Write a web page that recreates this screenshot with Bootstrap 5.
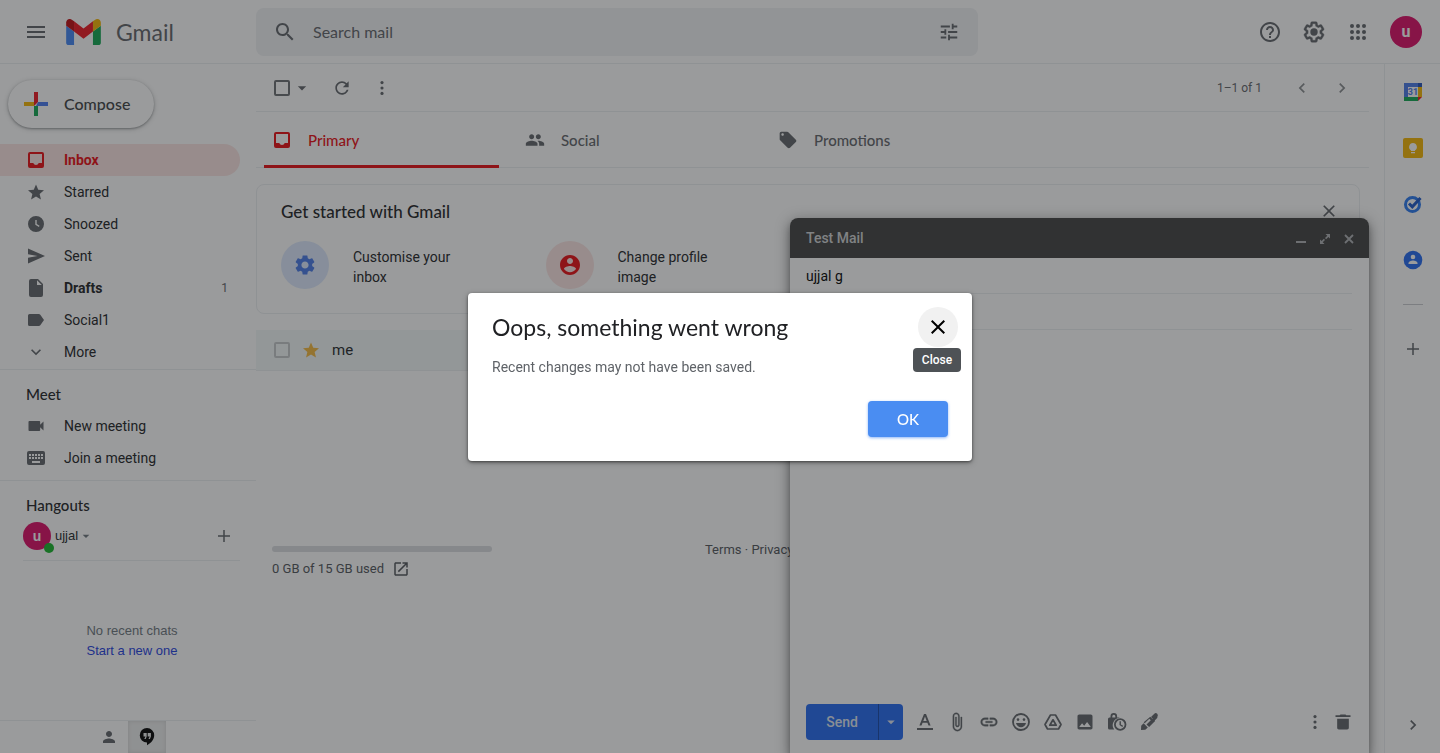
<!DOCTYPE html>
<html lang="en">
<head>
<meta charset="utf-8">
<meta name="viewport" content="width=device-width, initial-scale=1">
<title>Inbox - Gmail</title>
<link rel="stylesheet" href="https://cdn.jsdelivr.net/npm/bootstrap@5.3.0/dist/css/bootstrap.min.css">
<style>
  :root { --line: #eceef1; --ink: #202124; --muted: #5f6368; --accent: #ea0a10; --blue: #2268f0; }
  body { font-family: Roboto, "Liberation Sans", sans-serif; font-size: 14px; line-height: 20px; color: var(--ink); background: #fff; }
  .head-font { font-family: Lato, "Open Sans", sans-serif; }
  .rule-top { border-top: 1px solid var(--line); }
  .rule-bottom { border-bottom: 1px solid var(--line); }
  svg { display: block; fill: currentColor; flex: none; }
  .i16 { width: 16px; height: 16px; }
  .i18 { width: 18px; height: 18px; }
  .i20 { width: 20px; height: 20px; }
  .i22 { width: 22px; height: 22px; }
  .i24 { width: 24px; height: 24px; }
  .bare { background: none; border: 0; padding: 0; color: var(--muted); display: inline-flex; align-items: center; justify-content: center; }
  .hit44 { width: 44px; height: 44px; }
  .hit40 { width: 40px; height: 40px; }
  .hit32 { width: 32px; height: 32px; }
  .hit28 { width: 28px; height: 32px; }
  .hit24 { width: 24px; height: 24px; }
  .text-12 { font-size: 12px; color: var(--muted); }

  .topbar { height: 64px; padding-right: 12px; }
  .brand { width: 256px; padding-left: 26px; }
  .brand-logo { width: 35px; height: 26px; margin-left: 20px; margin-right: 15px; }
  .brand-name { font-size: 23px; line-height: 32px; color: var(--muted); }
  .search { background: #f0f2f4; border-radius: 8px; height: 48px; max-width: 722px; padding: 0 18px 0 17px; }
  .search input { border: 0; outline: 0; background: none; font-size: 16px; line-height: 24px; padding: 0; margin-left: 16px; color: var(--muted); }
  .search input::placeholder { color: var(--muted); opacity: 1; }
  .face { background: #dc0a64; color: #fff; font-weight: 700; border-radius: 50%; display: flex; align-items: center; justify-content: center; }
  .face-lg { width: 32px; height: 32px; font-size: 16px; }
  .face-sm { width: 28px; height: 28px; font-size: 14px; }

  .sidebar { width: 256px; }
  .compose-btn { height: 48px; border-radius: 24px; margin: 16px 0 16px 8px; padding: 0 24px 0 16px; background: #fff; border: 0; font-size: 16px; font-weight: 500; color: #3c4043; box-shadow: 0 1px 2px rgba(60,64,67,.4), 0 1px 4px 1px rgba(60,64,67,.2); }
  .side-item { height: 32px; padding-left: 26px; padding-right: 12px; margin-right: 16px; color: var(--ink); text-decoration: none; border-radius: 0 16px 16px 0; font-size: 14px; gap: 18px; }
  .side-item svg { color: var(--muted); }
  .side-item.on { background: #fce4e2; color: var(--accent); font-weight: 700; }
  .side-item.on svg { color: var(--accent); }
  .side-head { padding-left: 26px; font-weight: 500; font-size: 15px; margin: 14px 0 6px; line-height: 20px; }
  .side-meet { padding-bottom: 6px; margin-top: 1px; }
  .chat-font { font-family: "Liberation Sans", sans-serif; font-size: 13px; }
  .chat-user { margin: -6px 16px 0 23px; height: 46px; padding-bottom: 4px; }
  .chat-link { color: #1d40e0; text-decoration: none; }
  .online { position: absolute; right: -3px; bottom: -3px; width: 10px; height: 10px; background: #14b428; border-radius: 50%; }
  .chat-tabs { height: 33px; padding-left: 90px; }
  .chat-tab { width: 38px; color: var(--muted); }
  .chat-tab.on { background: #eceded; color: #000; box-shadow: inset 0 0 4px rgba(0,0,0,.12); }

  .content { padding-right: 15px; }
  .toolbar { height: 48px; padding: 0 7px 0 18px; }
  .tick { appearance: none; width: 16px; height: 16px; border: 2px solid #6b6e72; border-radius: 2px; margin: 0; flex: none; }
  .tick-light { border-color: #c4c7c9; }
  .tabs-bar { height: 56px; padding-left: 8px; }
  .tab-link { width: 235px; margin-right: 18px; padding-left: 8px; gap: 16px; color: var(--muted); text-decoration: none; font-weight: 500; font-size: 15px; border-bottom: 3px solid transparent; border-top: 3px solid transparent; margin-bottom: -1px; }
  .tab-link.on { color: var(--accent); border-bottom-color: var(--accent); }
  .starter { margin: 16px 9px 16px 0; border: 1px solid var(--line); border-radius: 8px; padding: 16px 20px 24px 24px; height: 130px; }
  .starter h2 { font-size: 17px; line-height: 22px; margin: 0; font-weight: 500; }
  .starter-row { margin-top: 18px; }
  .disc { width: 48px; height: 48px; border-radius: 50%; flex: none; display: flex; align-items: center; justify-content: center; }
  .disc-blue { background: #dce8fd; color: #4878e8; }
  .disc-red { background: #fce4e2; color: var(--accent); }
  .starter-text { width: 110px; padding-top: 3px; }
  .mails { font-size: 15px; margin: 0; --bs-table-bg: #f3f7f7; }
  .mails td { height: 40px; border-bottom: 1px solid var(--line); padding: 0; vertical-align: middle; }
  .mail-line { padding-left: 18px; gap: 9px; }
  .foot { font-size: 13px; line-height: 16px; color: #50545a; margin-top: 171px; padding: 0 16px; }
  .foot a { color: inherit; text-decoration: none; }
  .quota { width: 220px; height: 6px; border-radius: 3px; background: #dadce0; }

  .apps-rail { width: 56px; border-left: 1px solid var(--line); padding-top: 8px; }
  .rail-btn { width: 56px; height: 40px; margin-bottom: 16px; }
  .rail-rule { width: 20px; height: 1px; background: #c8cbce; margin: 8px 0 24px; }

  .draft { position: absolute; right: 71px; bottom: 0; width: 579px; height: 535px; border-radius: 8px 8px 0 0; background: #fff; box-shadow: 0 8px 10px 1px rgba(0,0,0,.14), 0 3px 14px 2px rgba(0,0,0,.3), 0 4px 5px rgba(0,0,0,.2); }
  .draft-head { height: 40px; background: #404040; border-radius: 8px 8px 0 0; padding: 0 8px 0 16px; color: #d0d2d4; font-weight: 500; }
  .draft-head .bare { color: #aeb0b3; }
  .draft-field { height: 36px; margin: 0 17px 0 16px; }
  .draft-field input { border: 0; outline: 0; background: none; padding: 0; width: 100%; color: #000; }
  .draft textarea { border: 0; outline: 0; resize: none; margin: 8px 16px; background: none; }
  .draft-foot { padding: 0 12px 13px 16px; }
  .send { height: 36px; background: var(--blue); color: #dfe6f2; border: 0; font-weight: 500; font-size: 14px; }
  .send-main { width: 72px; border-radius: 4px 0 0 4px; }
  .send-more { width: 25px; margin-right: 6px; border-radius: 0 4px 4px 0; border-left: 1px solid #1446a8; padding: 0; display: flex; align-items: center; justify-content: center; }

  .modal-backdrop { --bs-backdrop-bg: #202124; --bs-backdrop-opacity: .45; }
  .alert-box { --bs-modal-width: 504px; }
  .alert-box .modal-content { border: 0; border-radius: 4px; box-shadow: 0 1px 3px rgba(0,0,0,.5), 0 2px 6px rgba(0,0,0,.25); padding-bottom: 24px; }
  .alert-box .modal-header { padding: 14px 14px 0 24px; }
  .alert-box .modal-title { font-size: 23px; line-height: 32px; font-weight: 400; color: var(--ink); }
  .alert-box .modal-body { padding: 10px 24px 24px; color: var(--muted); }
  .alert-box .modal-footer { padding: 0 24px; }
  .x-round { width: 40px; height: 40px; border-radius: 50%; background: #f1f1f1; color: #000; }
  .tip { position: absolute; top: 41px; right: -3px; width: 48px; height: 24px; line-height: 24px; background: #4e5256; color: #fff; font-size: 12px; font-weight: 500; border-radius: 4px; text-align: center; }
  .ok-btn { width: 80px; height: 36px; border: 0; border-radius: 4px; background: #4a8df2; color: #fff; font-size: 15px; font-weight: 500; box-shadow: 0 1px 3px rgba(66,133,244,.6); }
</style>
</head>
<body class="vh-100 overflow-hidden">

<svg width="0" height="0" class="position-absolute" aria-hidden="true">
  <symbol id="menu" viewBox="0 0 24 24"><path d="M3 18h18v-2H3v2zm0-5h18v-2H3v2zm0-7v2h18V6H3z"/></symbol>
  <symbol id="search" viewBox="0 0 24 24"><path d="M15.5 14h-.79l-.28-.27C15.41 12.59 16 11.11 16 9.5 16 5.91 13.09 3 9.5 3S3 5.91 3 9.5 5.91 16 9.5 16c1.61 0 3.09-.59 4.23-1.57l.27.28v.79l5 4.99L20.49 19l-4.99-5zm-6 0C7.01 14 5 11.99 5 9.5S7.01 5 9.5 5 14 7.01 14 9.5 11.99 14 9.5 14z"/></symbol>
  <symbol id="tune" viewBox="0 0 24 24"><path d="M3 17v2h6v-2H3zM3 5v2h10V5H3zm10 16v-2h8v-2h-8v-2h-2v6h2zM7 9v2H3v2h4v2h2V9H7zm14 4v-2H11v2h10zm-6-4h2V7h4V5h-4V3h-2v6z"/></symbol>
  <symbol id="help" viewBox="0 0 24 24"><path d="M11 18h2v-2h-2v2zm1-16C6.48 2 2 6.48 2 12s4.48 10 10 10 10-4.48 10-10S17.52 2 12 2zm0 18c-4.41 0-8-3.59-8-8s3.59-8 8-8 8 3.59 8 8-3.59 8-8 8zm0-14c-2.21 0-4 1.79-4 4h2c0-1.1.9-2 2-2s2 .9 2 2c0 2-3 1.75-3 5h2c0-2.25 3-2.5 3-5 0-2.21-1.79-4-4-4z"/></symbol>
  <symbol id="gear-line" viewBox="0 0 24 24"><path d="M13.85 22.25h-3.7c-.74 0-1.36-.54-1.45-1.27l-.27-1.89c-.27-.14-.53-.29-.79-.46l-1.8.72c-.7.26-1.47-.03-1.81-.65L2.2 15.53c-.35-.66-.2-1.44.36-1.88l1.53-1.19c-.01-.15-.02-.3-.02-.46 0-.15.01-.31.02-.46l-1.52-1.19c-.59-.45-.74-1.26-.37-1.88l1.85-3.19c.34-.62 1.11-.9 1.79-.63l1.81.73c.26-.17.52-.32.78-.46l.27-1.91c.09-.7.71-1.25 1.44-1.25h3.7c.74 0 1.36.54 1.45 1.27l.27 1.89c.27.14.53.29.79.46l1.8-.72c.71-.26 1.48.03 1.82.65l1.84 3.18c.36.66.2 1.44-.36 1.88l-1.52 1.19c.01.15.02.3.02.46s-.01.31-.02.46l1.52 1.19c.56.45.72 1.23.37 1.86l-1.86 3.22c-.34.62-1.11.9-1.8.63l-1.8-.72c-.26.17-.52.32-.78.46l-.27 1.91c-.1.68-.72 1.22-1.46 1.22zm-3.23-2h2.76l.37-2.55.53-.22c.44-.18.88-.44 1.34-.78l.45-.34 2.38.96 1.38-2.4-2.03-1.58.07-.56c.03-.26.06-.51.06-.78s-.03-.53-.06-.78l-.07-.56 2.03-1.58-1.39-2.4-2.39.96-.45-.35c-.42-.32-.87-.58-1.33-.77l-.52-.22-.37-2.55h-2.76l-.37 2.55-.53.21c-.44.19-.88.44-1.34.79l-.45.33-2.38-.95-1.39 2.39 2.03 1.58-.07.56a7 7 0 0 0-.06.79c0 .26.02.53.06.78l.07.56-2.03 1.58 1.38 2.4 2.39-.96.45.35c.43.33.86.58 1.33.77l.53.22.38 2.55z" stroke="currentColor" stroke-width=".4"/><circle cx="12" cy="12" r="3.7"/></symbol>
  <symbol id="gear" viewBox="0 0 24 24"><path d="M19.14 12.94c.04-.3.06-.61.06-.94 0-.32-.02-.64-.07-.94l2.03-1.58c.18-.14.23-.41.12-.61l-1.92-3.32c-.12-.22-.37-.29-.59-.22l-2.39.96c-.5-.38-1.03-.7-1.62-.94l-.36-2.54c-.04-.24-.24-.41-.48-.41h-3.84c-.24 0-.43.17-.47.41l-.36 2.54c-.59.24-1.13.57-1.62.94l-2.39-.96c-.22-.08-.47 0-.59.22L2.74 8.87c-.12.21-.08.47.12.61l2.03 1.58c-.05.3-.09.63-.09.94s.02.64.07.94l-2.03 1.58c-.18.14-.23.41-.12.61l1.92 3.32c.12.22.37.29.59.22l2.39-.96c.5.38 1.03.7 1.62.94l.36 2.54c.05.24.24.41.48.41h3.84c.24 0 .44-.17.47-.41l.36-2.54c.59-.24 1.13-.56 1.62-.94l2.39.96c.22.08.47 0 .59-.22l1.92-3.32c.12-.22.07-.47-.12-.61l-2.01-1.58zM12 15.6c-1.98 0-3.6-1.62-3.6-3.6s1.62-3.6 3.6-3.6 3.6 1.62 3.6 3.6-1.62 3.6-3.6 3.6z"/></symbol>
  <symbol id="apps" viewBox="0 0 24 24"><circle cx="6" cy="6" r="2"/><circle cx="12" cy="6" r="2"/><circle cx="18" cy="6" r="2"/><circle cx="6" cy="12" r="2"/><circle cx="12" cy="12" r="2"/><circle cx="18" cy="12" r="2"/><circle cx="6" cy="18" r="2"/><circle cx="12" cy="18" r="2"/><circle cx="18" cy="18" r="2"/></symbol>
  <symbol id="inbox" viewBox="0 0 16 16"><path fill-rule="evenodd" d="M2 0h12a2 2 0 0 1 2 2v12a2 2 0 0 1-2 2H2a2 2 0 0 1-2-2V2a2 2 0 0 1 2-2zm0 2v9h3.300c.5 1.200 1.500 2 2.700 2s2.200-.8 2.700-2H14V2z"/></symbol>
  <symbol id="star" viewBox="2 2 20 19"><path d="M12 17.270L18.180 21l-1.640-7.030L22 9.240l-7.190-.61L12 2 9.190 8.630 2 9.240l5.460 4.730L5.820 21z"/></symbol>
  <symbol id="clock" viewBox="0 0 16 16"><path fill-rule="evenodd" d="M8 0a8 8 0 1 1 0 16A8 8 0 0 1 8 0zM7.300 4v4.700l3.600 2.200.7-1.100-2.900-1.800V4z"/></symbol>
  <symbol id="send" viewBox="0 0 17 16"><path d="M0 15.500L17 8 0 .5v5.700L9.500 8 0 9.800z"/></symbol>
  <symbol id="file" viewBox="0 0 14 18"><path d="M2 0h7l5 5v11a2 2 0 0 1-2 2H2a2 2 0 0 1-2-2V2a2 2 0 0 1 2-2zm6 1.200V6h4.800z" fill-rule="evenodd"/></symbol>
  <symbol id="label" viewBox="0 0 16 12"><path d="M12.300.7A2 2 0 0 0 10.800 0H1.600A1.600 1.600 0 0 0 0 1.600v8.800A1.600 1.600 0 0 0 1.600 12h9.200a2 2 0 0 0 1.500-.7L16 6z"/></symbol>
  <symbol id="down" viewBox="0 0 24 24"><path d="M16.590 8.590L12 13.170 7.410 8.590 6 10l6 6 6-6z"/></symbol>
  <symbol id="left" viewBox="0 0 24 24"><path d="M15.410 7.410L14 6l-6 6 6 6 1.410-1.410L10.830 12z"/></symbol>
  <symbol id="right" viewBox="0 0 24 24"><path d="M10 6L8.590 7.410 13.170 12l-4.580 4.590L10 18l6-6z"/></symbol>
  <symbol id="cam" viewBox="0 0 24 24"><path d="M17 10.500V7c0-.55-.45-1-1-1H4c-.55 0-1 .45-1 1v10c0 .55.45 1 1 1h12c.55 0 1-.45 1-1v-3.500l4 4v-11l-4 4z"/></symbol>
  <symbol id="keys" viewBox="0 0 18 14"><path fill-rule="evenodd" d="M2 0h14a2 2 0 0 1 2 2v10a2 2 0 0 1-2 2H2a2 2 0 0 1-2-2V2a2 2 0 0 1 2-2zM2 3v2h2V3zm3 0v2h2V3zm3 0v2h2V3zm3 0v2h2V3zm3 0v2h2V3zM2 6v2h2V6zm3 0v2h2V6zm3 0v2h2V6zm3 0v2h2V6zm3 0v2h2V6zM5 10v2h8v-2z"/></symbol>
  <symbol id="people" viewBox="0 0 24 24"><path d="M16 11c1.660 0 2.990-1.340 2.990-3S17.660 5 16 5c-1.660 0-3 1.340-3 3s1.340 3 3 3zm-8 0c1.660 0 2.990-1.340 2.990-3S9.660 5 8 5C6.340 5 5 6.340 5 8s1.340 3 3 3zm0 2c-2.330 0-7 1.170-7 3.500V19h14v-2.500c0-2.330-4.670-3.500-7-3.500zm8 0c-.29 0-.62.02-.97.05 1.160.84 1.970 1.970 1.970 3.450V19h6v-2.500c0-2.330-4.670-3.500-7-3.500z"/></symbol>
  <symbol id="tag" viewBox="0 0 24 24"><path d="M21.410 11.580l-9-9C12.050 2.220 11.550 2 11 2H4c-1.100 0-2 .9-2 2v7c0 .55.22 1.050.59 1.420l9 9c.36.36.86.58 1.410.58.55 0 1.050-.22 1.410-.59l7-7c.37-.36.59-.86.59-1.410 0-.55-.23-1.060-.59-1.420zM5.500 7C4.670 7 4 6.330 4 5.500S4.670 4 5.500 4 7 4.670 7 5.500 6.330 7 5.500 7z"/></symbol>
  <symbol id="person" viewBox="0 0 24 24"><path d="M12 12c2.210 0 4-1.790 4-4s-1.790-4-4-4-4 1.790-4 4 1.790 4 4 4zm0 2c-2.670 0-8 1.340-8 4v2h16v-2c0-2.660-5.330-4-8-4z"/></symbol>
  <symbol id="account" viewBox="2 2 20 20"><path d="M12 2C6.480 2 2 6.480 2 12s4.480 10 10 10 10-4.480 10-10S17.520 2 12 2zm0 3c1.660 0 3 1.340 3 3s-1.340 3-3 3-3-1.340-3-3 1.340-3 3-3zm0 14.200c-2.500 0-4.710-1.280-6-3.220.03-1.990 4-3.080 6-3.080 1.990 0 5.970 1.090 6 3.080-1.290 1.940-3.500 3.220-6 3.220z"/></symbol>
  <symbol id="refresh" viewBox="0 0 24 24"><path d="M17.650 6.350C16.200 4.900 14.210 4 12 4c-4.420 0-7.990 3.580-7.990 8s3.570 8 7.990 8c3.730 0 6.840-2.550 7.730-6h-2.080c-.82 2.330-3.040 4-5.650 4-3.310 0-6-2.690-6-6s2.690-6 6-6c1.660 0 3.140.69 4.220 1.780L13 11h7V4l-2.350 2.350z"/></symbol>
  <symbol id="dots" viewBox="0 0 24 24"><circle cx="12" cy="5.500" r="1.900"/><circle cx="12" cy="12" r="1.900"/><circle cx="12" cy="18.500" r="1.900"/></symbol>
  <symbol id="caret" viewBox="0 0 24 24"><path d="M7 10l5 5 5-5z"/></symbol>
  <symbol id="close" viewBox="0 0 24 24"><path d="M19 6.410L17.590 5 12 10.590 6.410 5 5 6.410 10.590 12 5 17.590 6.410 19 12 13.410 17.590 19 19 17.590 13.410 12z"/></symbol>
  <symbol id="close-bold" viewBox="0 0 16 16"><path d="M4 5l8 8M12 5l-8 8" fill="none" stroke="currentColor" stroke-width="1.800"/></symbol>
  <symbol id="plus" viewBox="0 0 24 24"><path d="M20 13h-7v7h-2v-7H4v-2h7V4h2v7h7z"/></symbol>
  <symbol id="launch" viewBox="0 0 24 24"><path d="M19 19H5V5h7V3H5c-1.110 0-2 .9-2 2v14c0 1.100.89 2 2 2h14c1.100 0 2-.9 2-2v-7h-2v7zM14 3v2h3.590l-9.830 9.830 1.410 1.410L19 6.410V10h2V3h-7z"/></symbol>
  <symbol id="min" viewBox="0 0 16 16"><path d="M3 11h10v2H3z"/></symbol>
  <symbol id="expand" viewBox="0 0 16 16"><path d="M8.500 4H13v4.500l-1.600-1.600-2.300 2.300-1.100-1.100 2.300-2.300zM7.500 14H3V9.500l1.600 1.600 2.300-2.300L8 9.900l-2.300 2.300z"/></symbol>
  <symbol id="format" viewBox="0 0 20 20"><path d="M2 16h16v2H2zM9 2h2l4.600 11.500h-2.100l-1.100-2.800H7.600l-1.100 2.800H4.400zm-.7 7h3.400L10 4.500z"/></symbol>
  <symbol id="clip" viewBox="0 0 24 24"><path d="M16.500 6v11.500c0 2.210-1.790 4-4 4s-4-1.790-4-4V5c0-1.380 1.120-2.500 2.500-2.500s2.500 1.120 2.500 2.500v10.500c0 .55-.45 1-1 1s-1-.45-1-1V6H10v9.500c0 1.380 1.120 2.500 2.500 2.500s2.500-1.120 2.500-2.500V5c0-2.210-1.790-4-4-4S7 2.790 7 5v12.500c0 3.040 2.460 5.500 5.500 5.500s5.500-2.460 5.500-5.500V6h-1.500z" stroke="currentColor" stroke-width=".4"/></symbol>
  <symbol id="link" viewBox="0 0 24 24"><path d="M3.900 12c0-1.710 1.390-3.100 3.100-3.100h4V7H7c-2.760 0-5 2.240-5 5s2.240 5 5 5h4v-1.900H7c-1.710 0-3.100-1.390-3.100-3.100zM8 13h8v-2H8v2zm9-6h-4v1.900h4c1.710 0 3.100 1.390 3.100 3.100s-1.390 3.100-3.100 3.100h-4V17h4c2.760 0 5-2.240 5-5s-2.240-5-5-5z" stroke="currentColor" stroke-width=".4"/></symbol>
  <symbol id="smile" viewBox="0 0 20 20"><circle cx="10" cy="10" r="8" fill="none" stroke="currentColor" stroke-width="1.800"/><circle cx="7" cy="7.600" r="1.300"/><circle cx="13" cy="7.600" r="1.300"/><path d="M5 11h10c-.6 2.600-2.600 4.200-5 4.200S5.600 13.600 5 11z"/></symbol>
  <symbol id="drive" viewBox="0 0 20 20"><path d="M7.500 3h5L18 12.500 15.500 17h-11L2 12.500z" fill="none" stroke="currentColor" stroke-width="1.700" stroke-linejoin="round"/><path d="M10 7.800l3.200 5.400H6.800z" fill="none" stroke="currentColor" stroke-width="1.700" stroke-linejoin="round"/></symbol>
  <symbol id="photo" viewBox="0 0 24 24"><path d="M21 19V5c0-1.100-.9-2-2-2H5c-1.100 0-2 .9-2 2v14c0 1.100.9 2 2 2h14c1.100 0 2-.9 2-2zM8.500 13.500l2.500 3.010L14.500 12l4.500 6H5l3.500-4.500z"/></symbol>
  <symbol id="lockclock" viewBox="0 0 20 20"><path fill-rule="evenodd" d="M3.500 5.500V4.300a3.300 3.300 0 0 1 6.600 0v1.200h1.400a2 2 0 0 1 1.400.6 7 7 0 0 0-5.600 11.400H2.600A1.600 1.600 0 0 1 1 15.900V7a1.500 1.500 0 0 1 1.500-1.500zm1.800 0h3V4.300a1.500 1.500 0 0 0-3 0z"/><circle cx="13.200" cy="12.500" r="5.300" fill="none" stroke="currentColor" stroke-width="1.800"/><path d="M12.500 9.300h1.400v3.100l2.200 1.400-.7 1.100-2.900-1.800z"/></symbol>
  <symbol id="pen" viewBox="0 0 20 20"><path d="M11.300 4.700l2.200 2.200 2.200-2.200a1 1 0 0 1-.2-1.300 2 2 0 0 1 2.700 2.700l-2.500 2.500.4.500-6 6-2.600-2.600 4.300-4.300-1.500-1.500-4.600 4.600-1-1zM4.600 11.200l4.200 4.200-2.500 2.400L2 18l.2-4.300z"/><path d="M12 5l3.300-3.200a2 2 0 0 1 2.900 2.900L15 8z"/></symbol>
  <symbol id="trash" viewBox="0 0 24 24"><path d="M5 19c0 1.100.9 2 2 2h10c1.100 0 2-.9 2-2V8H5v11zM21 4h-5l-1-1H9L8 4H3v2h18V4z"/></symbol>
  <symbol id="quote" viewBox="0 0 16 18"><path fill-rule="evenodd" d="M8 0a7.200 7.200 0 0 1 7.200 7.300c0 4-3 7.700-7.200 10v-2.800A7.200 7.200 0 0 1 8 0zM4.500 5v3.500h2L5.300 11h1.400l1-2.500V5zm4.200 0v3.500h2L9.500 11h1.400l1-2.500V5z"/></symbol>
</svg>

<div class="d-flex flex-column h-100">
  <header class="topbar rule-bottom d-flex align-items-center">
    <div class="brand d-flex align-items-center flex-shrink-0">
      <button class="bare" aria-label="Main menu"><svg class="i20" viewBox="2 2 20 20"><use href="#menu" width="24" height="24"/></svg></button>
      <svg class="brand-logo" viewBox="52 42 88 66" role="img" aria-label="Gmail"><path fill="#4285f4" d="M58 108h14V74L52 59v43c0 3.320 2.690 6 6 6"/><path fill="#10a650" d="M120 108h14c3.320 0 6-2.690 6-6V59l-20 15"/><path fill="#f4b400" d="M120 48v26l20-15v-8c0-7.420-8.470-11.650-14.400-7.200"/><path fill="#ee1520" d="M72 74V48l24 18 24-18v26L96 92"/><path fill="#c00a10" d="M52 51v8l20 15V48l-5.600-4.200c-5.940-4.450-14.400-.22-14.400 7.200"/></svg>
      <span class="brand-name head-font">Gmail</span>
    </div>
    <form class="search d-flex align-items-center flex-grow-1">
      <button type="button" class="bare" aria-label="Search"><svg class="i24"><use href="#search"/></svg></button>
      <input class="flex-grow-1 head-font" type="text" placeholder="Search mail" aria-label="Search mail">
      <button type="button" class="bare" aria-label="Search options"><svg class="i22"><use href="#tune"/></svg></button>
    </form>
    <div class="d-flex align-items-center ms-auto">
      <button class="bare hit44" aria-label="Support"><svg class="i24"><use href="#help"/></svg></button>
      <button class="bare hit44" aria-label="Settings"><svg class="i24"><use href="#gear-line"/></svg></button>
      <button class="bare hit44" aria-label="Google apps"><svg class="i24"><use href="#apps"/></svg></button>
      <button class="bare hit44 ms-1" aria-label="Account"><span class="face face-lg">u</span></button>
    </div>
  </header>

  <div class="d-flex flex-grow-1 overflow-hidden">
    <aside class="sidebar d-flex flex-column flex-shrink-0">
      <div>
        <button class="compose-btn head-font d-inline-flex align-items-center gap-3"><svg class="i24" viewBox="0 0 24 24"><path fill="#ee1520" d="M10 0h4v10l-4 4z"/><path fill="#f4b400" d="M0 10h10v4H0z"/><path fill="#4878f0" d="M14 10h10v4H12z"/><path fill="#10a650" d="M10 14h4v10h-4z"/></svg>Compose</button>
      </div>
      <nav>
        <a href="#" class="side-item on d-flex align-items-center"><svg class="i20" viewBox="-2 -2 20 20"><use href="#inbox" width="16" height="16"/></svg>Inbox</a>
        <a href="#" class="side-item d-flex align-items-center"><svg class="i20" viewBox="-2 -2 20 20"><use href="#star" width="16" height="16"/></svg>Starred</a>
        <a href="#" class="side-item d-flex align-items-center"><svg class="i20" viewBox="-2 -2 20 20"><use href="#clock" width="16" height="16"/></svg>Snoozed</a>
        <a href="#" class="side-item d-flex align-items-center"><svg class="i20" viewBox="-2 -2 20 20"><use href="#send" width="17" height="16"/></svg>Sent</a>
        <a href="#" class="side-item d-flex align-items-center"><svg class="i20" viewBox="-3 -1 20 20"><use href="#file" width="14" height="18"/></svg><b>Drafts</b><span class="text-12 ms-auto">1</span></a>
        <a href="#" class="side-item d-flex align-items-center"><svg class="i20" viewBox="-2 -4 20 20"><use href="#label" width="16" height="12"/></svg>Social1</a>
        <a href="#" class="side-item d-flex align-items-center"><svg class="i20"><use href="#down"/></svg>More</a>
      </nav>
      <section class="side-meet rule-top">
        <h2 class="side-head head-font">Meet</h2>
        <a href="#" class="side-item d-flex align-items-center"><svg class="i20"><use href="#cam"/></svg>New meeting</a>
        <a href="#" class="side-item d-flex align-items-center"><svg class="i20" viewBox="-1 -3 20 20"><use href="#keys" width="18" height="14"/></svg>Join a meeting</a>
      </section>
      <section class="rule-top d-flex flex-column flex-grow-1">
        <h2 class="side-head head-font">Hangouts</h2>
        <div class="chat-user chat-font rule-bottom d-flex align-items-center">
          <div class="position-relative me-1"><span class="face face-sm">u</span><span class="online"></span></div>
          <button class="bare text-body">ujjal<svg class="i16 text-secondary"><use href="#caret"/></svg></button>
          <button class="bare ms-auto hit32" aria-label="New conversation"><svg class="i18"><use href="#plus"/></svg></button>
        </div>
        <div class="chat-font text-center flex-grow-1 d-flex flex-column justify-content-center ps-2"><span class="text-secondary">No recent chats</span><span><a href="#" class="chat-link">Start a new one</a></span></div>
        <div class="chat-tabs rule-top d-flex">
          <button class="bare chat-tab" aria-label="Contacts"><svg class="i18"><use href="#person"/></svg></button>
          <button class="bare chat-tab on" aria-label="Conversations"><svg class="i18"><use href="#quote"/></svg></button>
        </div>
      </section>
    </aside>

    <main class="content flex-grow-1 overflow-hidden">
      <div class="toolbar rule-bottom d-flex align-items-center">
        <input type="checkbox" class="tick" aria-label="Select all">
        <button class="bare hit24" aria-label="Select options"><svg class="i20"><use href="#caret"/></svg></button>
        <button class="bare hit40 ms-2" aria-label="Refresh"><svg class="i20"><use href="#refresh"/></svg></button>
        <button class="bare hit40" aria-label="More"><svg class="i20"><use href="#dots"/></svg></button>
        <span class="text-12 ms-auto me-3 pe-1">1–1 of 1</span>
        <button class="bare hit40 opacity-75" aria-label="Newer"><svg class="i20"><use href="#left"/></svg></button>
        <button class="bare hit40 opacity-75" aria-label="Older"><svg class="i20"><use href="#right"/></svg></button>
      </div>
      <nav class="tabs-bar rule-bottom d-flex head-font">
        <a href="#" class="tab-link on d-flex align-items-center"><svg class="i20" viewBox="-2 -2 20 20"><use href="#inbox" width="16" height="16"/></svg>Primary</a>
        <a href="#" class="tab-link d-flex align-items-center"><svg class="i20"><use href="#people"/></svg>Social</a>
        <a href="#" class="tab-link d-flex align-items-center"><svg class="i20"><use href="#tag"/></svg>Promotions</a>
      </nav>
      <section class="starter">
        <div class="d-flex align-items-start"><h2 class="head-font">Get started with Gmail</h2><button class="bare ms-auto me-n1" aria-label="Dismiss"><svg class="i20"><use href="#close"/></svg></button></div>
        <div class="starter-row row g-0">
          <div class="col-3 d-flex align-items-center gap-4"><span class="disc disc-blue"><svg class="i24"><use href="#gear"/></svg></span><span class="starter-text">Customise your inbox</span></div>
          <div class="col-3 d-flex align-items-center gap-4"><span class="disc disc-red"><svg class="i20"><use href="#account"/></svg></span><span class="starter-text">Change profile image</span></div>
        </div>
      </section>
      <table class="table mails">
        <tbody><tr><td><div class="mail-line d-flex align-items-center"><input type="checkbox" class="tick tick-light" aria-label="Select message"><button class="bare hit24" aria-label="Starred"><svg class="i16" color="#f4b83c"><use href="#star"/></svg></button>me</div></td></tr></tbody>
      </table>
      <footer class="foot row g-0">
        <div class="col-4">
          <div class="quota mt-1"></div>
          <div class="d-flex align-items-center mt-2 gap-2">0 GB of 15 GB used <a href="#" aria-label="Manage storage"><svg class="i18"><use href="#launch"/></svg></a></div>
        </div>
        <div class="col-4 text-center"><a href="#">Terms</a> · <a href="#">Privacy</a> · <a href="#">Programme Policies</a></div>
      </footer>
    </main>

    <aside class="apps-rail d-flex flex-column align-items-center flex-shrink-0">
      <button class="bare rail-btn" aria-label="Calendar"><svg class="i20" viewBox="0 0 20 20"><path fill="#4878e8" d="M1 1h14v4H5v10H1z"/><path fill="#2450b8" d="M15 1h4v4h-4z"/><path fill="#f4b400" d="M15 5h4v10h-4z"/><path fill="#10a650" d="M1 15h14v4H1z"/><path fill="#ee1520" d="M15 15h4l-4 4z"/><path fill="#fff" d="M5 5h10v10H5z"/><text x="10" y="13" text-anchor="middle" font-size="9" font-weight="700" fill="#4878e8">31</text></svg></button>
      <button class="bare rail-btn" aria-label="Keep"><svg class="i20" viewBox="0 0 20 20"><rect width="20" height="20" rx="2" fill="#f4b400"/><path fill="#fff" d="M10 5a4 4 0 0 1 2 7.400V13H8v-.6A4 4 0 0 1 10 5zM8 14h4v1.300H8z"/></svg></button>
      <button class="bare rail-btn" aria-label="Tasks"><svg class="i20" viewBox="0 0 20 20"><circle cx="9.500" cy="10.500" r="7" fill="none" stroke="#2878f0" stroke-width="3"/><path d="M6 9.500l3.300 3.300L17.500 4" fill="none" stroke="#1c58c8" stroke-width="3"/></svg></button>
      <button class="bare rail-btn" aria-label="Contacts"><svg class="i20" viewBox="0 0 20 20"><circle cx="10" cy="10" r="9.300" fill="#2268f0"/><circle cx="10" cy="7" r="2.300" fill="#fff"/><path fill="#fff" d="M5.500 14v-1c0-1.800 3-2.600 4.500-2.600s4.500.8 4.500 2.600v1z"/></svg></button>
      <div class="rail-rule"></div>
      <button class="bare rail-btn" aria-label="Get add-ons"><svg class="i18"><use href="#plus"/></svg></button>
      <button class="bare mt-auto rail-btn mb-2" aria-label="Hide side panel"><svg class="i20"><use href="#right"/></svg></button>
    </aside>
  </div>
</div>

<section class="draft d-flex flex-column" aria-label="Draft">
  <div class="draft-head d-flex align-items-center">
    <span>Test Mail</span>
    <button class="bare hit24 ms-auto" aria-label="Minimise"><svg class="i16"><use href="#min"/></svg></button>
    <button class="bare hit24" aria-label="Full screen"><svg class="i16"><use href="#expand"/></svg></button>
    <button class="bare hit24" aria-label="Save and close"><svg class="i16"><use href="#close-bold"/></svg></button>
  </div>
  <div class="draft-field rule-bottom d-flex align-items-center"><input type="text" value="ujjal g" aria-label="To"></div>
  <div class="draft-field rule-bottom d-flex align-items-center"><input type="text" value="Test Mail" aria-label="Subject"></div>
  <textarea class="flex-grow-1" aria-label="Message body"></textarea>
  <div class="draft-foot d-flex align-items-center">
    <button class="send send-main">Send</button>
    <button class="send send-more" aria-label="More send options"><svg class="i18"><use href="#caret"/></svg></button>
    <button class="bare hit32" aria-label="Formatting options"><svg class="i20"><use href="#format"/></svg></button>
    <button class="bare hit32" aria-label="Attach files"><svg class="i20"><use href="#clip"/></svg></button>
    <button class="bare hit32" aria-label="Insert link"><svg class="i20"><use href="#link"/></svg></button>
    <button class="bare hit32" aria-label="Insert emoji"><svg class="i20"><use href="#smile"/></svg></button>
    <button class="bare hit32" aria-label="Insert from Drive"><svg class="i20"><use href="#drive"/></svg></button>
    <button class="bare hit32" aria-label="Insert photo"><svg class="i20"><use href="#photo"/></svg></button>
    <button class="bare hit32" aria-label="Confidential mode"><svg class="i20"><use href="#lockclock"/></svg></button>
    <button class="bare hit32" aria-label="Insert signature"><svg class="i20"><use href="#pen"/></svg></button>
    <button class="bare hit28 ms-auto" aria-label="More options"><svg class="i20"><use href="#dots"/></svg></button>
    <button class="bare hit28" aria-label="Discard draft"><svg class="i20"><use href="#trash"/></svg></button>
  </div>
</section>

<div class="modal-backdrop show"></div>
<div class="modal d-block" role="dialog" aria-modal="true" aria-labelledby="alertTitle">
  <div class="modal-dialog modal-dialog-centered alert-box">
    <div class="modal-content">
      <div class="modal-header border-0">
        <h1 class="modal-title head-font" id="alertTitle">Oops, something went wrong</h1>
        <div class="position-relative">
          <button class="bare x-round" aria-label="Close"><svg class="i24"><use href="#close"/></svg></button>
          <span class="tip" role="tooltip">Close</span>
        </div>
      </div>
      <div class="modal-body">Recent changes may not have been saved.</div>
      <div class="modal-footer border-0"><button class="ok-btn head-font m-0">OK</button></div>
    </div>
  </div>
</div>
<script src="https://cdn.jsdelivr.net/npm/bootstrap@5.3.0/dist/js/bootstrap.bundle.min.js"></script>
</body>
</html>
